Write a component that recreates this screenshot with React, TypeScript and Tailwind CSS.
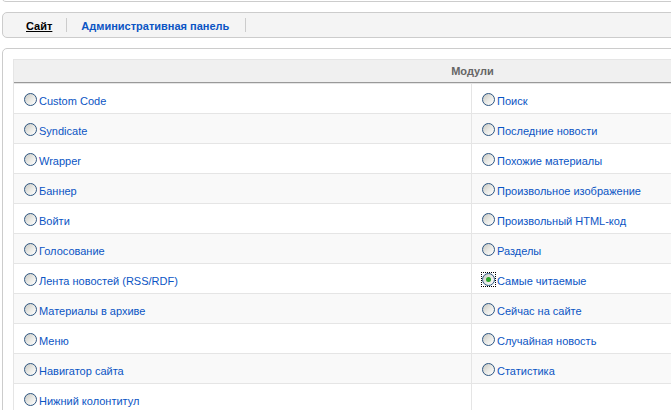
import React from "react";

const left = [
  "Custom Code",
  "Syndicate",
  "Wrapper",
  "Баннер",
  "Войти",
  "Голосование",
  "Лента новостей (RSS/RDF)",
  "Материалы в архиве",
  "Меню",
  "Навигатор сайта",
  "Нижний колонтитул",
];
const right = [
  "Поиск",
  "Последние новости",
  "Похожие материалы",
  "Произвольное изображение",
  "Произвольный HTML-код",
  "Разделы",
  "Самые читаемые",
  "Сейчас на сайте",
  "Случайная новость",
  "Статистика",
  "",
];

function Radio({ checked }: { checked?: boolean }) {
  return (
    <span
      className={
        "relative inline-flex items-center justify-center w-[13px] h-[13px] shrink-0 mt-[1px] " +
        (checked ? "outline outline-1 outline-dotted outline-black" : "")
      }
    >
      <span className="w-[13px] h-[13px] rounded-full border border-[#2d5580] bg-gradient-to-br from-[#c8c8c2] via-[#e8e8e4] to-white flex items-center justify-center">
        {checked && <span className="w-[5px] h-[5px] rounded-full bg-[#2aa82a]" />}
      </span>
    </span>
  );
}

function Cell({ label, even, checked }: { label: string; even: boolean; checked?: boolean }) {
  return (
    <div className={"h-[29px] flex items-center pl-[10px] " + (even ? "bg-[#f9f9f9]" : "bg-white")}>
      {label && (
        <>
          <Radio checked={checked} />
          <span className="ml-[2px] text-[#0b55c4] leading-none pt-[6px]">{label}</span>
        </>
      )}
    </div>
  );
}

export default function App() {
  return (
    <div className="w-[671px] h-[410px] overflow-hidden bg-white font-['Liberation_Sans',Arial,sans-serif] text-[11px]">
      <div className="w-[1000px]">
        <div className="-mt-[10px] h-[12px] ml-[1px] border border-[#cccccc] rounded-[5px] bg-white" />
        <div className="mt-[10px] ml-[2px] h-[26px] border border-[#cccccc] rounded-[5px] bg-[#f4f4f4] flex items-center pl-[23px] font-bold">
          <span className="text-black underline pt-[2px] leading-none">Сайт</span>
          <span className="mx-[14px] w-px h-[14px] bg-[#cccccc]" />
          <span className="text-[#0b55c4] pt-[2px] leading-none">Административная панель</span>
          <span className="ml-[16px] w-px h-[14px] bg-[#cccccc]" />
        </div>
        <div className="mt-[10px] ml-[2px] border border-[#cccccc] rounded-[5px] p-[10px] bg-white">
          <div className="w-[919px] bg-[#e5e5e5] p-px grid grid-cols-[457px_459px] gap-px">
            <div className="col-span-2 h-[23px] bg-[#f0f0f0] border-b border-[#999999] flex items-center justify-center font-bold text-[#666666]">
              Модули
            </div>
            {left.map((l, i) => (
              <React.Fragment key={i}>
                <Cell label={l} even={i % 2 === 1} />
                <Cell label={right[i]} even={i % 2 === 1} checked={i === 6} />
              </React.Fragment>
            ))}
          </div>
        </div>
      </div>
    </div>
  );
}
